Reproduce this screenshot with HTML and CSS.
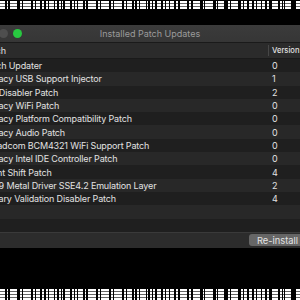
FILE: index.html
```html
<!DOCTYPE html>
<html lang="en">

<head>
    <meta charset="UTF-8">
    <meta name="viewport" content="width=device-width, initial-scale=1.0">
    <title>Installed Patch Updates</title>
    <link rel="stylesheet" href="styles.css">
</head>

<body>
    <div class="noise noise-top"></div>

    <div class="window">
        <div class="titlebar">
            <div class="lights">
                <span class="light close"></span>
                <span class="light minimize"></span>
                <span class="light zoom"></span>
            </div>
            <div class="title">Installed Patch Updates</div>
        </div>

        <div class="table">
            <div class="row head">
                <div class="cell name">Patch</div>
                <div class="cell version">Version</div>
            </div>
            <div class="row">
                <div class="cell name">Patch Updater</div>
                <div class="cell version">0</div>
            </div>
            <div class="row">
                <div class="cell name">Legacy USB Support Injector</div>
                <div class="cell version">1</div>
            </div>
            <div class="row">
                <div class="cell name">SIP Disabler Patch</div>
                <div class="cell version">2</div>
            </div>
            <div class="row">
                <div class="cell name">Legacy WiFi Patch</div>
                <div class="cell version">0</div>
            </div>
            <div class="row">
                <div class="cell name">Legacy Platform Compatibility Patch</div>
                <div class="cell version">0</div>
            </div>
            <div class="row">
                <div class="cell name">Legacy Audio Patch</div>
                <div class="cell version">0</div>
            </div>
            <div class="row">
                <div class="cell name">Broadcom BCM4321 WiFi Support Patch</div>
                <div class="cell version">0</div>
            </div>
            <div class="row">
                <div class="cell name">Legacy Intel IDE Controller Patch</div>
                <div class="cell version">0</div>
            </div>
            <div class="row">
                <div class="cell name">Night Shift Patch</div>
                <div class="cell version">4</div>
            </div>
            <div class="row">
                <div class="cell name">ATI 9 Metal Driver SSE4.2 Emulation Layer</div>
                <div class="cell version">2</div>
            </div>
            <div class="row">
                <div class="cell name">Library Validation Disabler Patch</div>
                <div class="cell version">4</div>
            </div>
            <div class="row empty"></div>
            <div class="row empty"></div>
        </div>

        <div class="footer">
            <button class="reinstall">Re-install</button>
        </div>
    </div>

    <div class="noise noise-bottom"></div>
</body>

</html>
```

FILE: styles.css
```css
* {
    margin: 0;
    padding: 0;
    box-sizing: border-box;
    font-family: Inter, "Noto Sans", sans-serif;
}

body {
    width: 300px;
    height: 300px;
    overflow: hidden;
    background: #000;
    display: flex;
    flex-direction: column;
}

/* scan noise along the top and bottom edge of the capture */
.noise {
    background-color: #fff;
    background-image:
        repeating-linear-gradient(90deg, transparent 0 5px, #000 5px 7px, transparent 7px 9px, #000 9px 10px, transparent 10px 13px),
        repeating-linear-gradient(90deg, transparent 0 8px, #000 8px 9px, transparent 9px 17px, #000 17px 19px, transparent 19px 23px),
        repeating-linear-gradient(0deg, transparent 0 2px, rgba(0, 0, 0, 0.6) 2px 3px);
}

.noise-top {
    height: 8px;
    margin-top: 1px;
}

.noise-bottom {
    height: 11px;
    margin-top: auto;
}

.window {
    margin-top: 16px;
    margin-left: -24px;
    width: 348px;
    background: #1f1f1f;
}

.titlebar {
    height: 17px;
    display: flex;
    align-items: center;
    position: relative;
    background: linear-gradient(#3b3b3b, #363636);
}

.lights {
    display: flex;
    gap: 5px;
    padding-left: 8.5px;
}

.light {
    width: 9px;
    height: 9px;
    border-radius: 50%;
    background: #4e4e4e;
}

.light.close {
    background: #fe5f57;
}

.light.zoom {
    background: #28c840;
}

.title {
    position: absolute;
    left: 0;
    right: 0;
    text-align: center;
    font-size: 9px;
    color: #9b9b9b;
}

.row {
    display: grid;
    grid-template-columns: 1fr 56px;
    height: 13.3px;
    align-items: center;
    font-size: 9px;
    letter-spacing: -0.15px;
    color: #e2e2e2;
}

.row:nth-child(even) {
    background: #1f1f1f;
}

.row:nth-child(odd) {
    background: #282828;
}

.row.head {
    height: 17px;
    background: #2b2b2b;
    border-top: 1px solid #1a1a1a;
    border-bottom: 1px solid #1a1a1a;
    font-size: 7.6px;
    font-weight: 500;
    letter-spacing: 0;
}

.cell.name {
    padding-left: 7px;
    white-space: nowrap;
    overflow: hidden;
}

.cell.version {
    padding-left: 4px;
}

.head .cell.name {
    padding-left: 6px;
    font-size: 9px;
    font-weight: 400;
}

.head .cell.version {
    border-left: 1px solid #474747;
    height: 11px;
    line-height: 11px;
    padding-left: 3px;
}

.footer {
    height: 16px;
    background: #2c2c2c;
    border-top: 1px solid #3a3a3a;
    display: flex;
    justify-content: flex-end;
    align-items: center;
}

.reinstall {
    width: 75px;
    height: 12px;
    border: none;
    border-radius: 3px 0 0 3px;
    background: #666;
    color: #e4e4e4;
    font-size: 9.3px;
    text-align: left;
    padding-left: 8px;
}
```
